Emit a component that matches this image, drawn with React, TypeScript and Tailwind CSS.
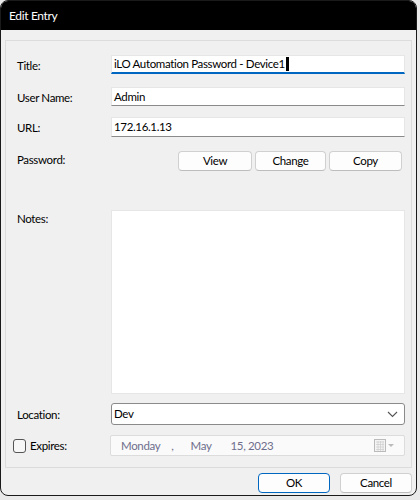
import React from "react";

const font = { fontFamily: 'Lato, "Noto Sans", "Liberation Sans", sans-serif', letterSpacing: "-0.35px" };

function Btn({ children, className = "" }: { children: React.ReactNode; className?: string }) {
  return (
    <div
      className={
        "h-[20px] flex items-center justify-center rounded-[4px] border border-[#d0d0d0] border-b-[#bdbdbd] bg-[#fdfdfd] text-black " +
        className
      }
    >
      {children}
    </div>
  );
}

export default function App() {
  return (
    <div className="w-[420px] h-[500px] bg-[#eaeaea] text-[11.5px] text-black" style={font}>
      <div className="w-[417px] h-[496px] rounded-[8px] border border-[#1a1a1a] overflow-hidden bg-[#f0f0f0] flex flex-col">
        <div className="h-[29px] bg-black text-white text-[12px] flex items-center pl-[8px] shrink-0">Edit Entry</div>
        <div className="px-[4px] pt-[10px]">
          <div className="h-[428px] border border-[#dcdcdc] pl-[11px] pr-[6px] pt-[14px]">
            {/* Title */}
            <div className="flex items-center h-[19px]">
              <div className="w-[94px] pt-[2px]">Title:</div>
              <div className="relative flex-1 h-[19px] bg-white border border-[#e6e6e6] border-b-2 border-b-[#0067c0] flex items-center pl-[2px]">
                <span>iLO Automation Password - Device1</span>
                <span className="inline-block w-[3px] h-[14px] bg-black ml-[1px]" />
              </div>
            </div>
            {/* User Name */}
            <div className="flex items-center h-[19px] mt-[13px]">
              <div className="w-[94px] pt-[2px]">User Name:</div>
              <div className="flex-1 h-[19px] bg-white border border-[#e6e6e6] border-b-[#8a8a8a] flex items-center pl-[2px]">Admin</div>
            </div>
            {/* URL */}
            <div className="flex items-center h-[20px] mt-[11px]">
              <div className="w-[94px] pt-[2px]">URL:</div>
              <div className="flex-1 h-[20px] bg-white border border-[#e6e6e6] border-b-[#8a8a8a] flex items-center pl-[2px]">172.16.1.13</div>
            </div>
            {/* Password */}
            <div className="flex items-start h-[20px] mt-[14px]">
              <div className="w-[94px] pt-[0px]">Password:</div>
              <div className="flex-1 flex gap-[3px] pl-[71px] pr-[3px]">
                <Btn className="w-[74px]">View</Btn>
                <Btn className="w-[71px]">Change</Btn>
                <Btn className="w-[73px]">Copy</Btn>
              </div>
            </div>
            {/* Notes */}
            <div className="flex items-start mt-[39px]">
              <div className="w-[94px] pt-[0px]">Notes:</div>
              <div className="flex-1 h-[184px] bg-white border border-[#e6e6e6]" />
            </div>
            {/* Location */}
            <div className="flex items-center mt-[9px]">
              <div className="w-[94px] pt-[2px]">Location:</div>
              <div className="flex-1 h-[22px] bg-white border border-[#8a8a8a] rounded-[3px] flex items-center pl-[2px] pr-[6px] justify-between">
                <span>Dev</span>
                <svg width="11" height="7" viewBox="0 0 11 7">
                  <path d="M1 1 L5.5 5.5 L10 1" fill="none" stroke="#555" strokeWidth="1.1" />
                </svg>
              </div>
            </div>
            {/* Expires */}
            <div className="flex items-center mt-[10px] -ml-[4px]">
              <div className="w-[97px] flex items-center gap-[4px]">
                <div className="w-[13px] h-[14px] rounded-[3px] border border-[#555] bg-[#f7f7f7]" />
                <span>Expires:</span>
              </div>
              <div className="flex-1 h-[21px] bg-[#fafafa] border border-[#dcdcdc] rounded-[2px] flex items-center text-[#6e6e8c] pl-[10px] pr-[8px]">
                <span>Monday</span>
                <span className="ml-[11px]">,</span>
                <span className="ml-[17px]">May</span>
                <span className="ml-[19px]">15, 2023</span>
                <div className="flex-1" />
                <svg width="22" height="14" viewBox="0 0 22 14">
                  <rect x="0.5" y="0.5" width="11" height="12" fill="#f4f4f4" stroke="#bbb" />
                  <path d="M2 3 H10 M2 5.5 H10 M2 8 H10 M2 10.5 H10 M4 2 V12 M6.5 2 V12 M9 2 V12" stroke="#d0d0d0" strokeWidth="0.8" />
                  <path d="M14 5 L20 5 L17 8 Z" fill="#bbb" />
                </svg>
              </div>
            </div>
          </div>
          {/* OK / Cancel */}
          <div className="flex justify-end gap-[10px] mt-[5px] pr-[0px]">
            <div className="w-[72px] h-[20px] flex items-center justify-center rounded-[4px] border border-[#0067c0] bg-[#fdfdfd]">OK</div>
            <Btn className="w-[72px]">Cancel</Btn>
          </div>
        </div>
      </div>
    </div>
  );
}
